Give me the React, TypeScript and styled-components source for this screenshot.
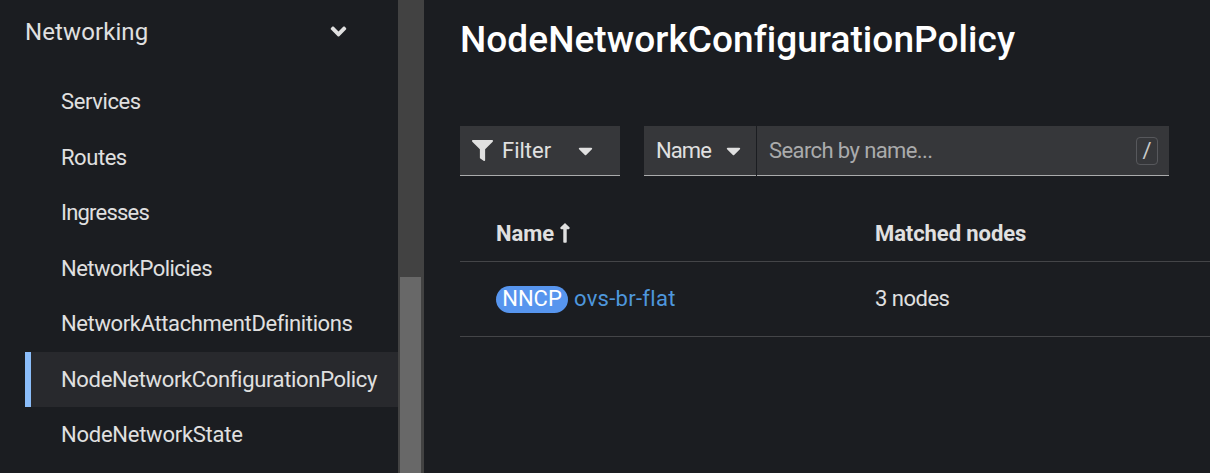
import React from 'react';
import styled, { createGlobalStyle } from 'styled-components';
import { FaAngleDown, FaCaretDown, FaFilter, FaLongArrowAltUp } from 'react-icons/fa';

const GlobalStyle = createGlobalStyle`
  *, *::before, *::after { box-sizing: border-box; }
  body {
    margin: 0;
    overflow: hidden;
    background: #1b1d21;
    color: #e0e0e0;
    font-family: Roboto, "Liberation Sans", sans-serif;
    font-size: 22px;
    font-variant-ligatures: none;
  }
`;

const Page = styled.div`
  display: flex;
  height: 473px;
  overflow: hidden;
`;

const Sidebar = styled.nav`
  flex: 0 0 398px;
  padding-left: 25px;
`;

const SectionToggle = styled.div`
  display: flex;
  align-items: center;
  justify-content: space-between;
  height: 64px;
  padding-right: 47px;
  font-size: 24px;

  svg { display: block; width: 25px; height: 25px; margin-bottom: 2px; }
`;

const NavList = styled.ul`
  list-style: none;
  margin: 10px 0 0;
  padding: 0;
`;

const NavItem = styled.li<{ $active?: boolean }>`
  display: flex;
  align-items: center;
  height: 55.5px;
  padding-left: 30px;
  border-left: 6px solid ${({ $active }) => ($active ? '#8bbdf9' : 'transparent')};
  background: ${({ $active }) => ($active ? '#28292d' : 'transparent')};
`;

const Track = styled.span<{ $spacing?: number }>`
  letter-spacing: ${({ $spacing = 0 }) => $spacing}px;
  white-space: nowrap;
`;

const ScrollTrack = styled.div`
  flex: 0 0 26px;
  padding: 277px 3px 0 2px;
  background: #424242;
`;

const ScrollThumb = styled.div`
  height: 100%;
  background: #686868;
`;

const Main = styled.main`
  flex: 1;
  min-width: 0;
  padding-left: 36px;
`;

const Title = styled.h1`
  height: 80px;
  margin: 0;
  color: #fff;
  font-size: 37px;
  font-weight: 500;
  line-height: 80px;
`;

const Toolbar = styled.div`
  display: flex;
  margin-top: 46px;
`;

const Control = styled.div<{ $width: number; $after?: number }>`
  display: flex;
  align-items: center;
  width: ${({ $width }) => $width}px;
  height: 50px;
  margin-right: ${({ $after = 0 }) => $after}px;
  padding: 0 12px;
  background: #36373a;
  border-bottom: 1px solid #aaabac;
`;

const FilterIcon = styled(FaFilter)`
  width: 21px;
  height: 21px;
  margin-right: 9px;
`;

const Caret = styled(FaCaretDown)<{ $end?: boolean }>`
  width: 23px;
  height: 23px;
  margin-bottom: 1px;
  margin-left: ${({ $end }) => ($end ? 'auto' : '0')};
  margin-right: ${({ $end }) => ($end ? '-1px' : '0')};
`;

const FilterLabel = styled.span`
  width: 72px;
  white-space: nowrap;
`;

const Placeholder = styled.span`
  flex: 1;
  color: #aaabac;
`;

const Key = styled.kbd`
  width: 22px;
  height: 28px;
  margin-right: -1px;
  border: 1px solid #57585c;
  border-radius: 4px;
  color: #c9c9c9;
  font: inherit;
  line-height: 26px;
  text-align: center;
`;

const Table = styled.div`
  margin-top: 30px;
`;

const Row = styled.div<{ $height: number; $head?: boolean }>`
  display: grid;
  grid-template-columns: 379px 1fr;
  align-items: center;
  height: ${({ $height }) => $height}px;
  padding-left: 36px;
  border-bottom: 1px solid #444548;
  font-weight: ${({ $head }) => ($head ? 700 : 400)};
`;

const Cell = styled.div`
  display: flex;
  align-items: center;
`;

const SortIcon = styled(FaLongArrowAltUp)`
  width: 22px;
  height: 22px;
  margin-bottom: 2px;
`;

const Badge = styled.span`
  width: 72px;
  height: 27px;
  margin-right: 6px;
  border-radius: 14px;
  background: #5795ee;
  color: #fff;
  line-height: 26px;
  text-align: center;
`;

const ResourceLink = styled.a`
  margin-bottom: 2px;
  color: #4e97dd;
`;

const NodeCount = styled.span`
  margin-bottom: 2px;
`;

const items = [
  { label: 'Services', spacing: -0.4 },
  { label: 'Routes', spacing: -0.45 },
  { label: 'Ingresses', spacing: -0.8 },
  { label: 'NetworkPolicies', spacing: -0.54 },
  { label: 'NetworkAttachmentDefinitions', spacing: -0.37 },
  { label: 'NodeNetworkConfigurationPolicy', spacing: -0.34, active: true },
  { label: 'NodeNetworkState', spacing: -0.25 },
];

export default function App() {
  return (
    <>
      <GlobalStyle />
      <Page>
        <Sidebar>
          <SectionToggle>
            <Track $spacing={0.1}>Networking</Track>
            <FaAngleDown />
          </SectionToggle>
          <NavList>
            {items.map(({ label, spacing, active }) => (
              <NavItem key={label} $active={active}>
                <Track $spacing={spacing}>{label}</Track>
              </NavItem>
            ))}
          </NavList>
        </Sidebar>
        <ScrollTrack>
          <ScrollThumb />
        </ScrollTrack>
        <Main>
          <Title>
            <Track $spacing={0.06}>NodeNetworkConfigurationPolicy</Track>
          </Title>
          <Toolbar>
            <Control $width={160} $after={24}>
              <FilterIcon />
              <FilterLabel>
                <Track>Filter</Track>
              </FilterLabel>
              <Caret />
            </Control>
            <Control $width={112} $after={1}>
              <Track $spacing={-0.9}>Name</Track>
              <Caret $end />
            </Control>
            <Control $width={412}>
              <Placeholder>
                <Track $spacing={-0.6}>Search by name...</Track>
              </Placeholder>
              <Key>/</Key>
            </Control>
          </Toolbar>
          <Table>
            <Row $height={56} $head>
              <Cell>
                <Track>Name</Track>
                <SortIcon />
              </Cell>
              <Cell>
                <Track $spacing={-0.08}>Matched nodes</Track>
              </Cell>
            </Row>
            <Row $height={75}>
              <Cell>
                <Badge>
                  <Track>NNCP</Track>
                </Badge>
                <ResourceLink>
                  <Track $spacing={0.28}>ovs-br-flat</Track>
                </ResourceLink>
              </Cell>
              <Cell>
                <NodeCount>
                  <Track $spacing={-0.5}>3 nodes</Track>
                </NodeCount>
              </Cell>
            </Row>
          </Table>
        </Main>
      </Page>
    </>
  );
}
